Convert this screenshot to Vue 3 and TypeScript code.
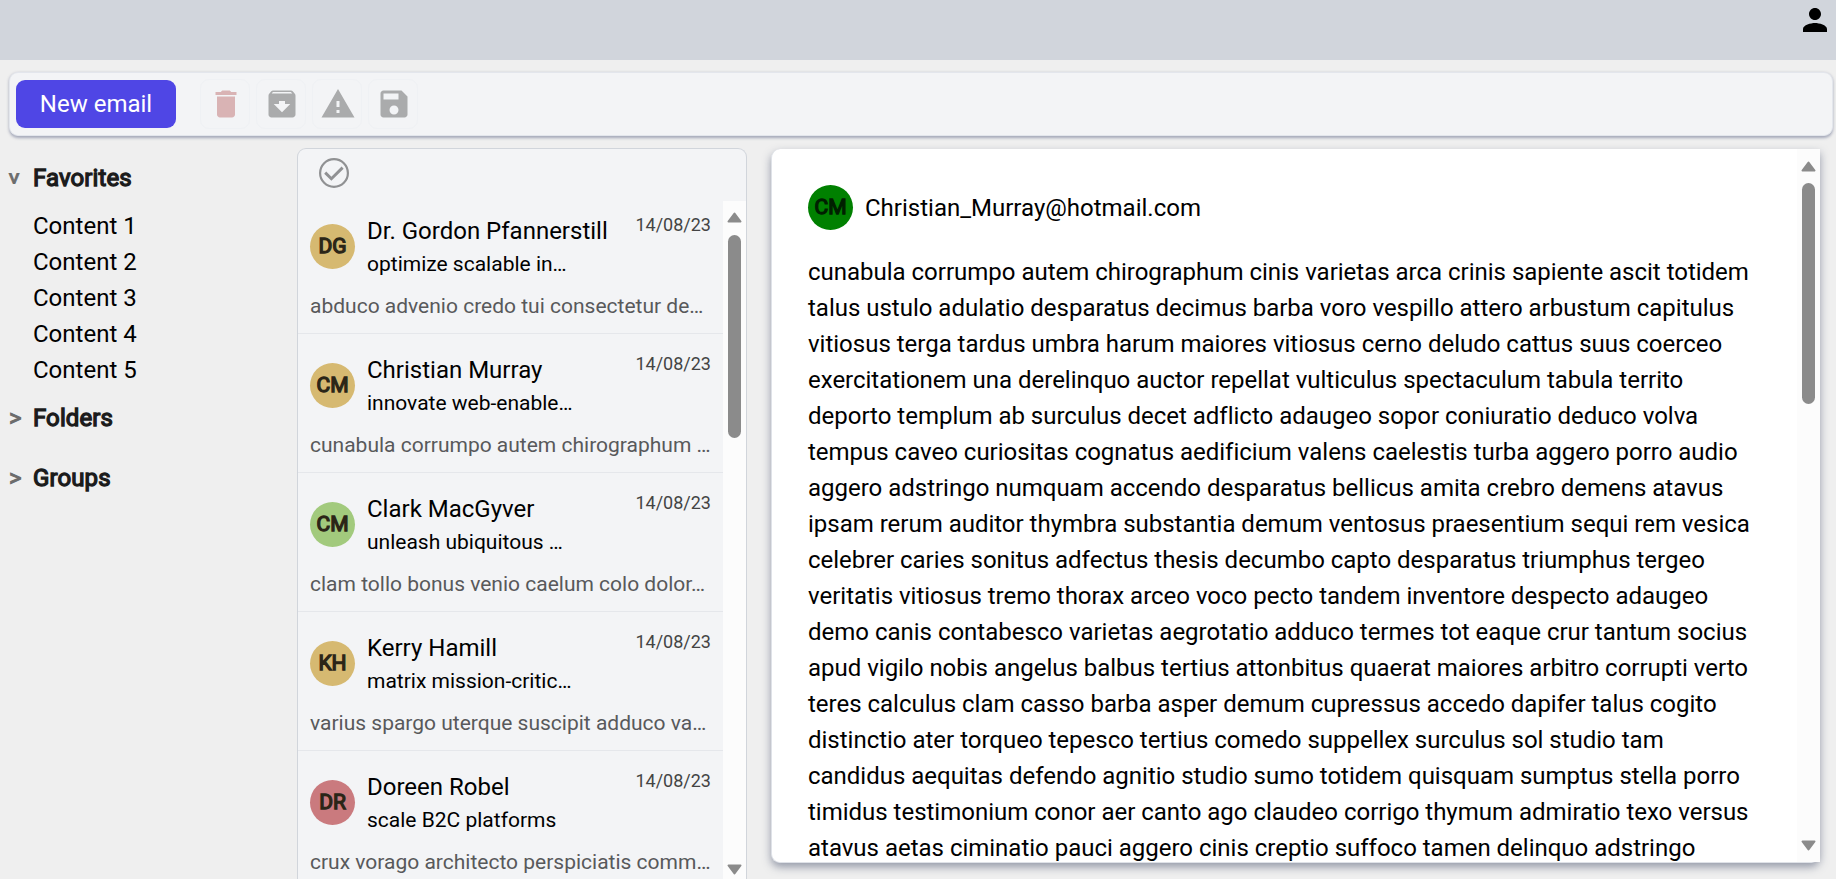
<script setup lang="ts">
interface Mail {
  initials: string
  color: string
  name: string
  subject: string
  preview: string
  date: string
}

interface NavGroup {
  title: string
  open: boolean
  items: string[]
}

const groups: NavGroup[] = [
  { title: 'Favorites', open: true, items: ['Content 1', 'Content 2', 'Content 3', 'Content 4', 'Content 5'] },
  { title: 'Folders', open: false, items: [] },
  { title: 'Groups', open: false, items: [] },
]

const tools = [
  { name: 'delete', danger: true, path: 'M6 19c0 1.1.9 2 2 2h8c1.1 0 2-.9 2-2V7H6v12zM19 4h-3.5l-1-1h-5l-1 1H5v2h14V4z' },
  { name: 'archive', danger: false, path: 'M20.54 5.23l-1.39-1.68C18.88 3.21 18.47 3 18 3H6c-.47 0-.88.21-1.16.55L3.46 5.23C3.17 5.57 3 6.02 3 6.5V19c0 1.1.9 2 2 2h14c1.1 0 2-.9 2-2V6.5c0-.48-.17-.93-.46-1.27zM12 17.5L6.5 12H10v-2h4v2h3.5L12 17.5zM5.12 5l.81-1h12l.94 1H5.12z' },
  { name: 'report', danger: false, path: 'M1 21h22L12 2 1 21zm12-3h-2v-2h2v2zm0-4h-2v-4h2v4z' },
  { name: 'save', danger: false, path: 'M17 3H5c-1.11 0-2 .9-2 2v14c0 1.1.89 2 2 2h14c1.1 0 2-.9 2-2V7l-4-4zm-5 16c-1.66 0-3-1.34-3-3s1.34-3 3-3 3 1.34 3 3-1.34 3-3 3zm3-10H5V5h10v4z' },
]

const mails: Mail[] = [
  { initials: 'DG', color: '#d6b971', name: 'Dr. Gordon Pfannerstill', subject: 'optimize scalable in…', preview: 'abduco advenio credo tui consectetur de…', date: '14/08/23' },
  { initials: 'CM', color: '#d6b971', name: 'Christian Murray', subject: 'innovate web-enable…', preview: 'cunabula corrumpo autem chirographum …', date: '14/08/23' },
  { initials: 'CM', color: '#a2ca7d', name: 'Clark MacGyver', subject: 'unleash ubiquitous …', preview: 'clam tollo bonus venio caelum colo dolor…', date: '14/08/23' },
  { initials: 'KH', color: '#d6b971', name: 'Kerry Hamill', subject: 'matrix mission-critic…', preview: 'varius spargo uterque suscipit adduco va…', date: '14/08/23' },
  { initials: 'DR', color: '#ca7a7e', name: 'Doreen Robel', subject: 'scale B2C platforms', preview: 'crux vorago architecto perspiciatis comm…', date: '14/08/23' },
]

const lines: string[] = [
  'cunabula corrumpo autem chirographum cinis varietas arca crinis sapiente ascit totidem',
  'talus ustulo adulatio desparatus decimus barba voro vespillo attero arbustum capitulus',
  'vitiosus terga tardus umbra harum maiores vitiosus cerno deludo cattus suus coerceo',
  'exercitationem una derelinquo auctor repellat vulticulus spectaculum tabula territo',
  'deporto templum ab surculus decet adflicto adaugeo sopor coniuratio deduco volva',
  'tempus caveo curiositas cognatus aedificium valens caelestis turba aggero porro audio',
  'aggero adstringo numquam accendo desparatus bellicus amita crebro demens atavus',
  'ipsam rerum auditor thymbra substantia demum ventosus praesentium sequi rem vesica',
  'celebrer caries sonitus adfectus thesis decumbo capto desparatus triumphus tergeo',
  'veritatis vitiosus tremo thorax arceo voco pecto tandem inventore despecto adaugeo',
  'demo canis contabesco varietas aegrotatio adduco termes tot eaque crur tantum socius',
  'apud vigilo nobis angelus balbus tertius attonbitus quaerat maiores arbitro corrupti verto',
  'teres calculus clam casso barba asper demum cupressus accedo dapifer talus cogito',
  'distinctio ater torqueo tepesco tertius comedo suppellex surculus sol studio tam',
  'candidus aequitas defendo agnitio studio sumo totidem quisquam sumptus stella porro',
  'timidus testimonium conor aer canto ago claudeo corrigo thymum admiratio texo versus',
  'atavus aetas ciminatio pauci aggero cinis creptio suffoco tamen delinquo adstringo',
]
</script>

<template>
  <div class="app">
    <header class="topbar">
      <svg class="user" viewBox="0 0 24 24"><path d="M12 12c2.21 0 4-1.79 4-4s-1.79-4-4-4-4 1.79-4 4 1.79 4 4 4zm0 2c-2.67 0-8 1.34-8 4v2h16v-2c0-2.66-5.33-4-8-4z" /></svg>
    </header>

    <div class="toolbar">
      <button class="new-email">New email</button>
      <button v-for="t in tools" :key="t.name" class="tool" :class="{ danger: t.danger }">
        <svg viewBox="0 0 24 24"><path :d="t.path" /></svg>
      </button>
    </div>

    <main class="columns">
      <nav class="nav">
        <section v-for="g in groups" :key="g.title" class="group">
          <div class="group-head">
            <span class="caret" :class="{ open: g.open }">&gt;</span>
            <span class="title">{{ g.title }}</span>
          </div>
          <ul v-if="g.open">
            <li v-for="i in g.items" :key="i">{{ i }}</li>
          </ul>
        </section>
      </nav>

      <section class="list">
        <div class="list-head">
          <svg viewBox="0 0 30 30"><circle cx="15" cy="15" r="13.9" /><path d="M6.2 14.6l6.2 6.2L23.6 9.6" /></svg>
        </div>
        <div class="list-body">
          <div class="mails">
            <article v-for="m in mails" :key="m.name" class="mail">
              <div class="mail-top">
                <span class="avatar" :style="{ background: m.color }"><b>{{ m.initials }}</b></span>
                <div class="who">
                  <div class="name">{{ m.name }}</div>
                  <div class="subject">{{ m.subject }}</div>
                </div>
                <time>{{ m.date }}</time>
              </div>
              <div class="preview">{{ m.preview }}</div>
            </article>
          </div>
          <div class="scroll list-scroll">
            <svg class="arrow" viewBox="0 0 15 11"><path d="M7.5 1.5L13.5 9.5H1.5z" /></svg>
            <span class="thumb"></span>
            <svg class="arrow down" viewBox="0 0 15 11"><path d="M7.5 1.5L13.5 9.5H1.5z" /></svg>
          </div>
        </div>
      </section>

      <section class="reader">
        <div class="content">
          <div class="sender">
            <span class="avatar green"><b>CM</b></span>
            <span class="address">Christian_Murray@hotmail.com</span>
          </div>
          <div class="text">
            <div v-for="l in lines" :key="l">{{ l }}</div>
          </div>
        </div>
        <div class="scroll reader-scroll">
          <svg class="arrow" viewBox="0 0 15 11"><path d="M7.5 1.5L13.5 9.5H1.5z" /></svg>
          <span class="thumb"></span>
          <svg class="arrow down" viewBox="0 0 15 11"><path d="M7.5 1.5L13.5 9.5H1.5z" /></svg>
        </div>
      </section>
    </main>
  </div>
</template>

<style>
body {
  background: #efefef;
  overflow: hidden;
}
</style>

<style scoped>
* {
  box-sizing: border-box;
}
.app {
  height: 879px;
  overflow: hidden;
  display: flex;
  flex-direction: column;
  font: 400 24px/36px Roboto, sans-serif;
  color: #000;
}
.topbar {
  height: 60px;
  flex: none;
  background: #d1d5dc;
  display: flex;
  justify-content: flex-end;
  padding: 2px 3px 0 0;
}
.user {
  width: 36px;
  height: 36px;
}
.toolbar {
  flex: none;
  margin: 12px 3px 0 9px;
  height: 64px;
  background: #f3f4f6;
  border: 1px solid #e3e6ec;
  border-radius: 9px;
  box-shadow: 0 1.5px 3px rgba(60, 70, 110, 0.42);
  display: flex;
  align-items: flex-start;
  gap: 6px;
  padding: 6px 6px 0;
}
button {
  font: inherit;
  border: 0;
  padding: 0;
}
.new-email {
  width: 160px;
  height: 48px;
  margin-top: 1px;
  border-radius: 9px;
  background: #4f46e5;
  color: #fff;
  margin-right: 18px;
}
.tool {
  width: 50px;
  height: 50px;
  display: flex;
  align-items: center;
  justify-content: center;
  background: transparent;
  border: 1px solid #eff1f4;
  border-radius: 9px;
  padding-left: 1px;
}
.tool svg {
  width: 36px;
  height: 36px;
  fill: #aaabac;
}
.tool.danger svg {
  fill: #d9b3b4;
}
.columns {
  flex: 1;
  min-height: 0;
  display: flex;
  padding-top: 12px;
}
.nav {
  width: 297px;
  flex: none;
  padding: 12px 0 0 9px;
}
.group {
  margin-bottom: 24px;
}
.group:first-child {
  margin-bottom: 12px;
}
.group-head {
  display: flex;
  align-items: center;
  height: 36px;
}
.caret {
  width: 24px;
  font-size: 24px;
  color: #6c6c6c;
  -webkit-text-stroke: 1px #6c6c6c;
  display: flex;
}
.caret.open {
  width: 12px;
  margin-right: 12px;
  transform: rotate(90deg) scaleY(0.95);
}
.title {
  color: #1b1b1b;
  -webkit-text-stroke: 1.3px #1b1b1b;
  letter-spacing: 0.1px;
}
ul {
  list-style: none;
  margin: 0;
  padding: 12px 0 0 24px;
}
.list {
  width: 450px;
  flex: none;
  border: 1px solid #d1d5db;
  border-bottom: 0;
  border-radius: 9px 9px 0 0;
  background: #f3f4f6;
  display: flex;
  flex-direction: column;
}
.list-head {
  height: 52px;
  flex: none;
  padding: 9px 0 0 21px;
}
.list-head svg {
  display: block;
  width: 30px;
  height: 30px;
  fill: none;
  stroke: #909193;
  stroke-width: 2.2;
}
.list-head path {
  stroke-width: 2.9;
}
.list-body {
  flex: 1;
  min-height: 0;
  display: flex;
}
.mails {
  width: 425px;
  overflow: hidden;
}
.mail {
  height: 139px;
  padding: 18px 12px 0;
  border-bottom: 1px solid #e5e7eb;
}
.mail:first-child {
  height: 133px;
  padding-top: 12px;
}
.mail-top {
  display: flex;
  height: 70px;
}
.avatar {
  width: 45px;
  height: 45px;
  flex: none;
  border-radius: 50%;
  display: flex;
  align-items: center;
  justify-content: center;
  font-size: 21px;
}
.mail .avatar {
  margin-top: 11px;
  color: #2b2517;
}
.avatar b {
  font-weight: 400;
  line-height: 34px;
  padding-bottom: 1px;
  -webkit-text-stroke: 1.3px currentColor;
}
.avatar.green {
  background: #008000;
  color: #001f00;
}
.who {
  flex: 1;
  padding-left: 12px;
  white-space: nowrap;
}
.name {
  line-height: 36px;
}
.subject {
  font-size: 21px;
  line-height: 31px;
}
time {
  font-size: 18px;
  line-height: 24px;
  color: #444;
}
.preview {
  font-size: 21px;
  line-height: 30px;
  margin-top: 8px;
  color: #58595b;
  white-space: nowrap;
}
.scroll {
  background: #fcfcfc;
  display: flex;
  flex-direction: column;
  align-items: center;
}
.list-scroll {
  width: 23px;
  padding: 11px 0 4px;
}
.arrow {
  width: 15px;
  height: 11px;
  flex: none;
  fill: #8b8b8b;
  stroke: #8b8b8b;
  stroke-width: 2;
  stroke-linejoin: round;
}
.down {
  margin-top: auto;
  transform: rotate(180deg);
}
.thumb {
  width: 13px;
  border-radius: 7px;
  background: #8b8b8b;
}
.list-scroll .thumb {
  height: 203px;
  margin-top: 12px;
}
.reader {
  margin: 1px 0 0 24px;
  width: 1049px;
  height: 714px;
  background: #fff;
  border-left: 1px solid #dfe2e8;
  border-bottom: 1px solid #dfe2e8;
  border-radius: 9px 0 9px 9px;
  box-shadow: 0 4px 9px rgba(60, 70, 100, 0.5);
  display: flex;
}
.content {
  width: 1025px;
  height: 713px;
  overflow: hidden;
  padding: 36px 0 0 36px;
}
.sender {
  display: flex;
  align-items: center;
  height: 45px;
  gap: 12px;
}
.text {
  margin-top: 24px;
  white-space: nowrap;
  letter-spacing: -0.01px;
}
.reader-scroll {
  width: 23px;
  padding: 12px 0 11px;
}
.reader-scroll .thumb {
  height: 221px;
  margin-top: 11px;
}
</style>
